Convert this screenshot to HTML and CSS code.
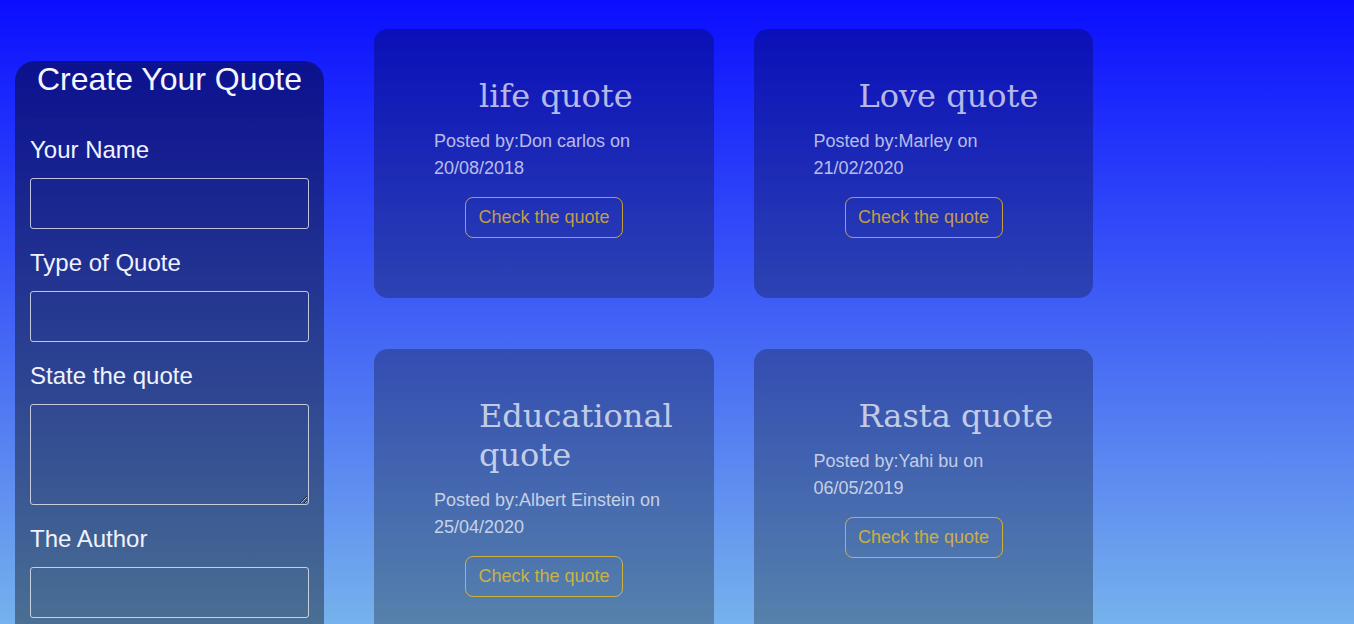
FILE: index.html
```html
<!DOCTYPE html>
<html lang="en">
<head>
<meta charset="utf-8">
<title>Quotes</title>
<link rel="stylesheet" href="styles.css">
</head>
<body>
<div class="page">
  <aside class="form-panel">
    <h1 class="form-title">Create Your Quote</h1>
    <form class="quote-form">
      <label class="field-label" for="name">Your Name</label>
      <input class="field-input" id="name" type="text">
      <label class="field-label" for="type">Type of Quote</label>
      <input class="field-input" id="type" type="text">
      <label class="field-label" for="quote">State the quote</label>
      <textarea class="field-input field-textarea" id="quote"></textarea>
      <label class="field-label" for="author">The Author</label>
      <input class="field-input" id="author" type="text">
    </form>
  </aside>
  <main class="quote-grid">
    <article class="quote-card">
      <h2 class="quote-title">life quote</h2>
      <p class="quote-meta">Posted by:Don carlos on 20/08/2018</p>
      <button class="quote-btn" type="button">Check the quote</button>
    </article>
    <article class="quote-card">
      <h2 class="quote-title">Love quote</h2>
      <p class="quote-meta">Posted by:Marley on 21/02/2020</p>
      <button class="quote-btn" type="button">Check the quote</button>
    </article>
    <article class="quote-card">
      <h2 class="quote-title">Educational quote</h2>
      <p class="quote-meta">Posted by:Albert Einstein on 25/04/2020</p>
      <button class="quote-btn" type="button">Check the quote</button>
    </article>
    <article class="quote-card">
      <h2 class="quote-title">Rasta quote</h2>
      <p class="quote-meta">Posted by:Yahi bu on 06/05/2019</p>
      <button class="quote-btn" type="button">Check the quote</button>
    </article>
  </main>
</div>
</body>
</html>
```
FILE: styles.css
```css
html {
  min-height: 100%;
  background: #76b2ec linear-gradient(to bottom, #0a0eff, #76b2ec) fixed;
}

body {
  margin: 0;
  font-family: "Liberation Sans", Arial, sans-serif;
}

.page {
  display: flex;
  align-items: flex-start;
  padding-left: 15px;
}

.form-panel {
  width: 309px;
  box-sizing: border-box;
  margin-top: 61px;
  padding: 0 15px 40px;
  border-radius: 20px 20px 0 0;
  background: linear-gradient(to bottom, rgba(0, 0, 0, 0.44), rgba(0, 0, 0, 0.37));
}

.form-title {
  margin: 0;
  padding-bottom: 17px;
  border-bottom: 1px solid rgba(0, 0, 0, 0.08);
  font-size: 32px;
  line-height: 37px;
  font-weight: normal;
  text-align: center;
  color: #f4f6ff;
}

.quote-form {
  padding-top: 20px;
}

.field-label {
  display: block;
  margin-bottom: 14px;
  font-size: 24px;
  line-height: 28px;
  color: #f0f2ff;
}

.field-input {
  display: block;
  width: 100%;
  box-sizing: border-box;
  height: 51px;
  margin: 0 0 20px;
  background: transparent;
  border: 1px solid rgba(232, 232, 240, 0.8);
  border-radius: 3px;
  color: #fff;
}

.field-textarea {
  height: 101px;
}

.quote-grid {
  display: grid;
  grid-template-columns: repeat(2, 339.5px);
  column-gap: 40px;
  row-gap: 51px;
  margin: 29px 0 0 50px;
}

.quote-card {
  padding: 47.5px 30px 60px 60px;
  border-radius: 14px;
  background: rgba(0, 0, 0, 0.27);
}

.quote-title {
  margin: 0 0 12.5px 45px;
  font-family: "DejaVu Serif", serif;
  font-size: 32px;
  font-weight: normal;
  line-height: 39px;
  color: rgba(255, 255, 255, 0.7);
}

.quote-meta {
  margin: 0 0 15px;
  font-size: 18px;
  line-height: 27px;
  color: rgba(255, 255, 255, 0.7);
}

.quote-btn {
  display: block;
  height: 41px;
  margin-left: 31px;
  padding: 0 12.5px;
  font-family: "Liberation Sans", Arial, sans-serif;
  font-size: 18px;
  white-space: nowrap;
  color: rgba(255, 200, 20, 0.72);
  background: transparent;
  border: 1px solid rgba(255, 200, 20, 0.72);
  border-radius: 8px;
}
```
